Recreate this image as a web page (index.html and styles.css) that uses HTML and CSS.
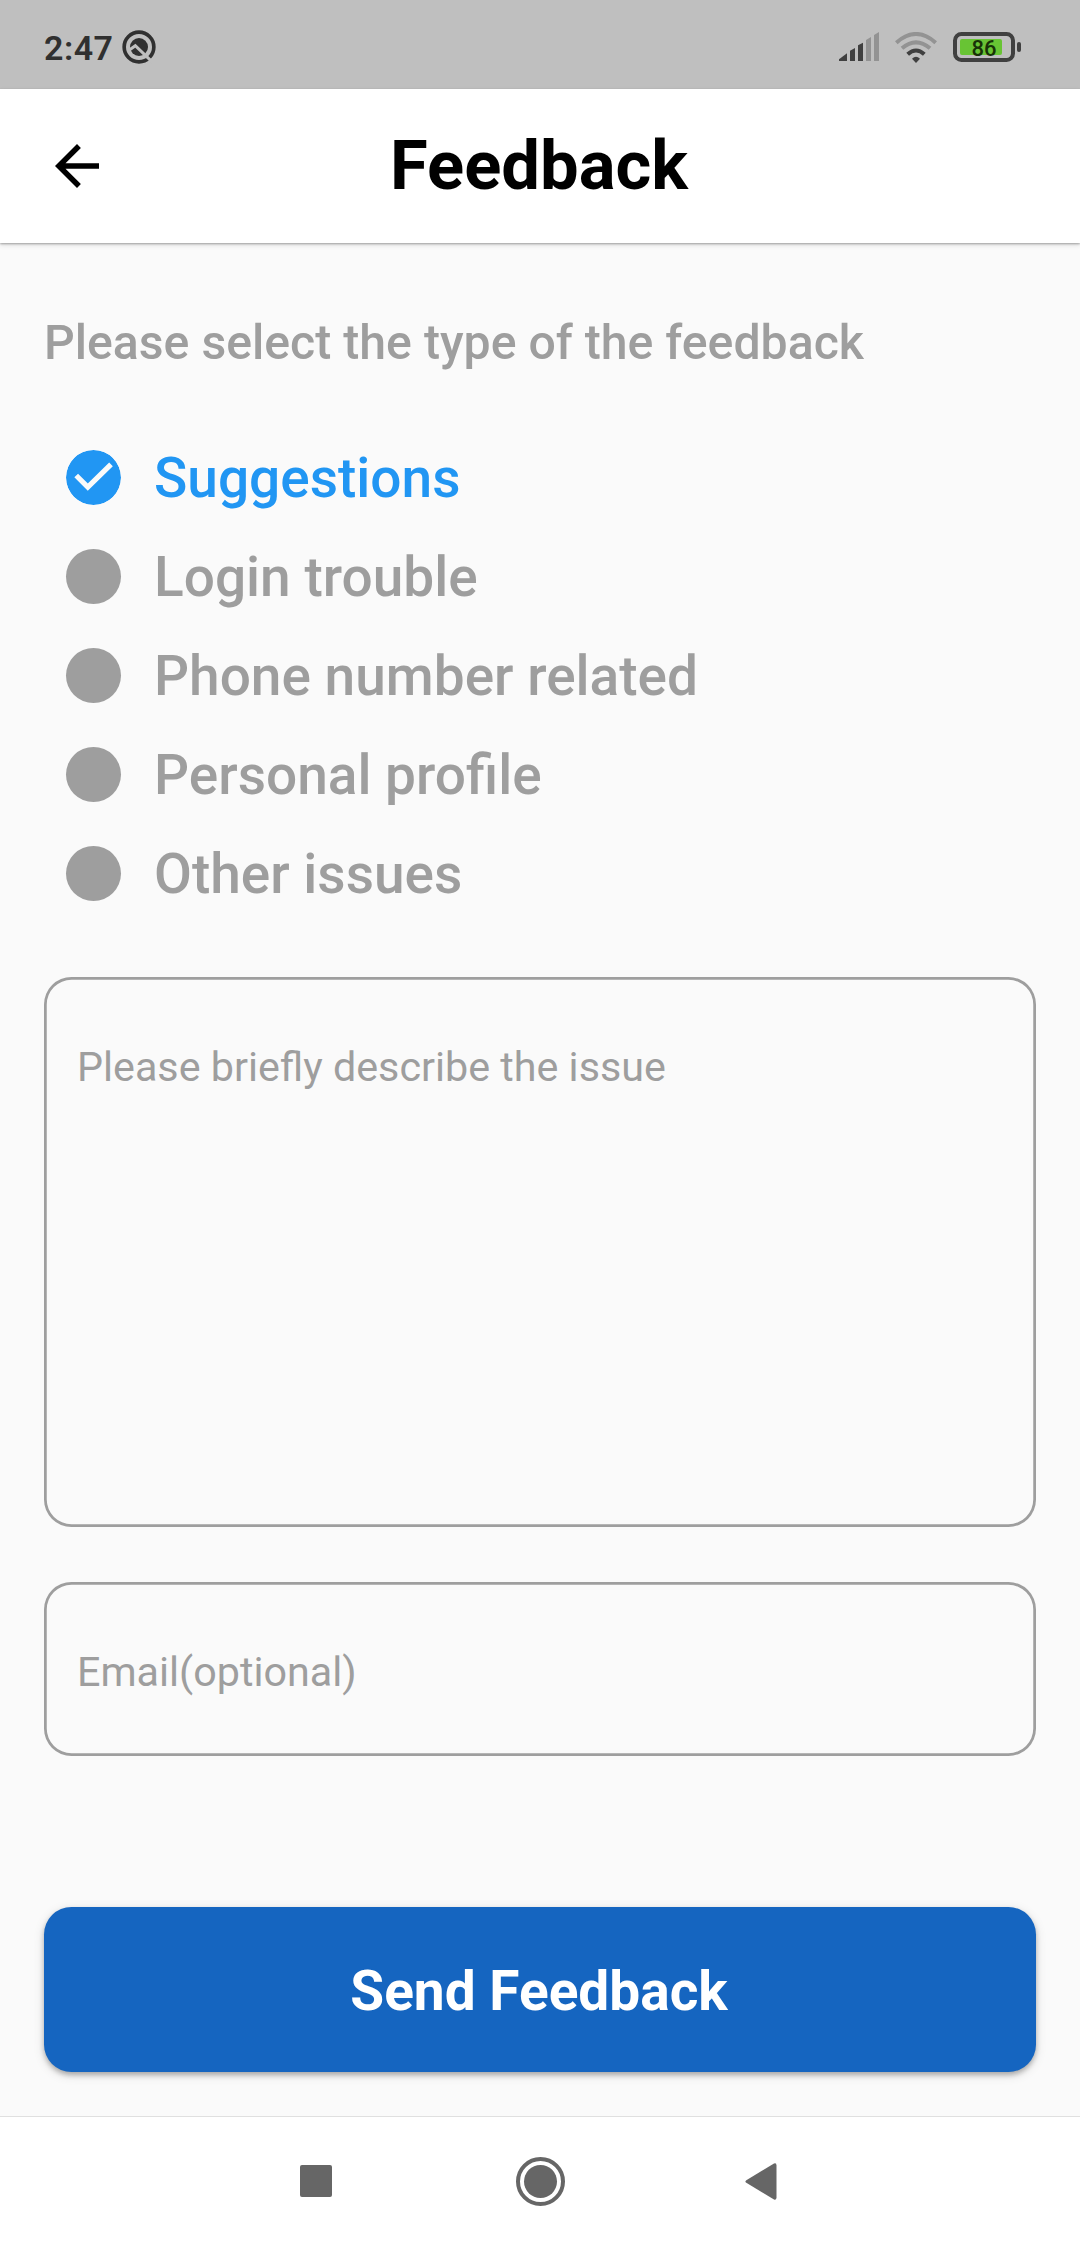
FILE: index.html
```html
<!DOCTYPE html>
<html lang="en">
<head>
<meta charset="utf-8">
<title>Feedback</title>
<link rel="stylesheet" href="styles.css">
</head>
<body>
<div class="screen">
  <div class="status-bar">
    <div class="status-left">
      <span class="clock">2:47</span>
      <svg class="status-app" width="34" height="34" viewBox="0 0 102 102">
        <circle cx="51" cy="51" r="44.5" fill="none" stroke="#303030" stroke-width="11"/>
        <circle cx="51" cy="51" r="27" fill="#303030"/>
        <path d="M22 60L40 47L92 97" fill="none" stroke="#bfbfbf" stroke-width="9"/>
      </svg>
    </div>
    <div class="status-right">
      <svg class="signal" width="41" height="30" viewBox="0 0 123 90">
        <path d="M0 87V82L24 64V87Z" fill="#404040"/>
        <path d="M33 87V56L48 48V87Z" fill="#404040"/>
        <path d="M57 87V40L72 32V87Z" fill="#404040"/>
        <path d="M81 87V24L96 15V87ZM105 87V9L120 0V87Z" fill="#939393"/>
      </svg>
      <svg class="wifi" width="42" height="31" viewBox="0 0 126 93">
        <g fill="none" stroke-width="12">
          <path d="M4 32Q63-20 122 32M21 49Q63 13 105 49" stroke="#939393"/>
          <path d="M38 67Q63 44 88 67" stroke="#404040"/>
        </g>
        <path d="M51 80Q63 68 75 80L63 93Z" fill="#404040"/>
      </svg>
      <svg class="battery" width="68" height="30" viewBox="0 0 68 30">
        <rect x="2" y="2" width="58" height="26" rx="6.5" fill="none" stroke="#404040" stroke-width="4"/>
        <rect x="7" y="7" width="42" height="16" rx="2" fill="#68c434"/>
        <rect x="64" y="10" width="4" height="10" rx="2" fill="#404040"/>
        <text x="31" y="23.6" class="battery-level">86</text>
      </svg>
    </div>
  </div>

  <header class="app-bar">
    <svg class="back" width="66" height="66" viewBox="0 0 24 24"><path d="M20 11H7.83l5.59-5.59L12 4l-8 8 8 8 1.41-1.41L7.83 13H20v-2z"/></svg>
    <h1 class="title">Feedback</h1>
  </header>

  <main class="content">
    <p class="prompt">Please select the type of the feedback</p>
    <ul class="options">
      <li class="option selected">
        <svg class="dot" width="55" height="55" viewBox="0 0 55 55"><circle cx="27.5" cy="27.5" r="27.5" fill="#2196f3"/><path d="M10.2 25.5L21.8 37.2L45 14.3" fill="none" stroke="#fafafa" stroke-width="5.2"/></svg>
        <span class="option-label">Suggestions</span>
      </li>
      <li class="option"><span class="dot"></span><span class="option-label">Login trouble</span></li>
      <li class="option"><span class="dot"></span><span class="option-label">Phone number related</span></li>
      <li class="option"><span class="dot"></span><span class="option-label">Personal profile</span></li>
      <li class="option"><span class="dot"></span><span class="option-label">Other issues</span></li>
    </ul>
    <div class="field description">Please briefly describe the issue</div>
    <div class="field email">Email(optional)</div>
    <button class="send" type="button">Send Feedback</button>
  </main>

  <nav class="nav-bar">
    <svg width="49" height="49" viewBox="0 0 49 49"><rect x="8" y="8" width="32" height="32" rx="2"/></svg>
    <svg width="49" height="49" viewBox="0 0 49 49"><circle cx="24.5" cy="24.5" r="22.5" fill="none" stroke="#666" stroke-width="4"/><circle cx="24.5" cy="24.5" r="16.5"/></svg>
    <svg width="49" height="49" viewBox="0 0 49 49"><path d="M6.3 23.2L34 6.6Q36.5 5.6 36.5 8.5V40.5Q36.5 43.4 34 42.4L6.3 25.8Q4.5 24.5 6.3 23.2Z"/></svg>
  </nav>
</div>
</body>
</html>
```
FILE: styles.css
```css
* { box-sizing: border-box; }
body {
  margin: 0;
  background: #fafafa;
  font-family: Roboto, sans-serif;
}
.screen {
  width: 1080px;
  height: 2246px;
  display: flex;
  flex-direction: column;
}
.status-bar {
  height: 89px;
  padding: 0 59px 0 44px;
  background: #bfbfbf;
  display: flex;
  justify-content: space-between;
}
.status-left,
.status-right {
  display: flex;
  align-items: flex-start;
}
.clock {
  padding-top: 28px;
  font-size: 34px;
  font-weight: 600;
  letter-spacing: 0.5px;
  line-height: 40px;
  color: #303030;
}
.status-app { margin: 30px 0 0 8px; }
.signal { margin-top: 32px; }
.wifi { margin: 32px 0 0 15px; }
.battery { margin: 32px 0 0 16px; }
.battery-level {
  font-size: 22px;
  font-weight: 500;
  text-anchor: middle;
  fill: #183208;
}
.app-bar {
  height: 154px;
  padding: 0 44px;
  background: #fff;
  display: grid;
  grid-template-columns: 66px 1fr 66px;
  align-items: center;
  box-shadow: 0 1px 2px rgba(0, 0, 0, 0.3), 0 2px 5px rgba(0, 0, 0, 0.12);
}
.title {
  margin: 0;
  padding-right: 2px;
  text-align: center;
  font-size: 68.75px;
  font-weight: 700;
  line-height: 80px;
}
.content {
  flex: 1;
  padding: 71px 44px 0;
  display: flex;
  flex-direction: column;
  color: #9e9e9e;
}
.prompt {
  margin: 0;
  font-size: 48.2px;
  font-weight: 500;
  line-height: 57px;
}
.options {
  list-style: none;
  margin: 56px 0 0;
  padding: 0 22px;
}
.option {
  height: 99px;
  display: flex;
  align-items: center;
  gap: 33px;
}
.dot {
  width: 55px;
  height: 55px;
  margin-top: 1px;
  border-radius: 50%;
  background: #9e9e9e;
}
.option-label {
  padding-top: 3px;
  font-size: 55px;
  font-weight: 500;
  line-height: 64px;
}
.selected { color: #2196f3; }
.selected .dot { background: none; }
.field {
  padding: 66px 33px 0;
  border: 0;
  border-radius: 27.5px;
  box-shadow: inset 0 0 0 2.75px #9e9e9e;
  font-size: 41.25px;
  line-height: 48px;
}
.description {
  height: 550px;
  margin-top: 55px;
}
.email {
  height: 174px;
  margin-top: 55px;
}
.send {
  height: 165px;
  margin-top: 151px;
  padding: 3px 2px 0 0;
  border: 0;
  border-radius: 27.5px;
  background: #1565c0;
  box-shadow: 0 3px 5px rgba(0, 0, 0, 0.26), 0 3px 12px rgba(0, 0, 0, 0.12);
  color: #fff;
  font: 700 55px/64px Roboto, sans-serif;
}
.nav-bar {
  height: 130px;
  border-top: 1px solid #e0e0e0;
  background: #fff;
  display: flex;
  justify-content: center;
  align-items: center;
  gap: 175px;
}
.nav-bar svg { fill: #666; }
```
